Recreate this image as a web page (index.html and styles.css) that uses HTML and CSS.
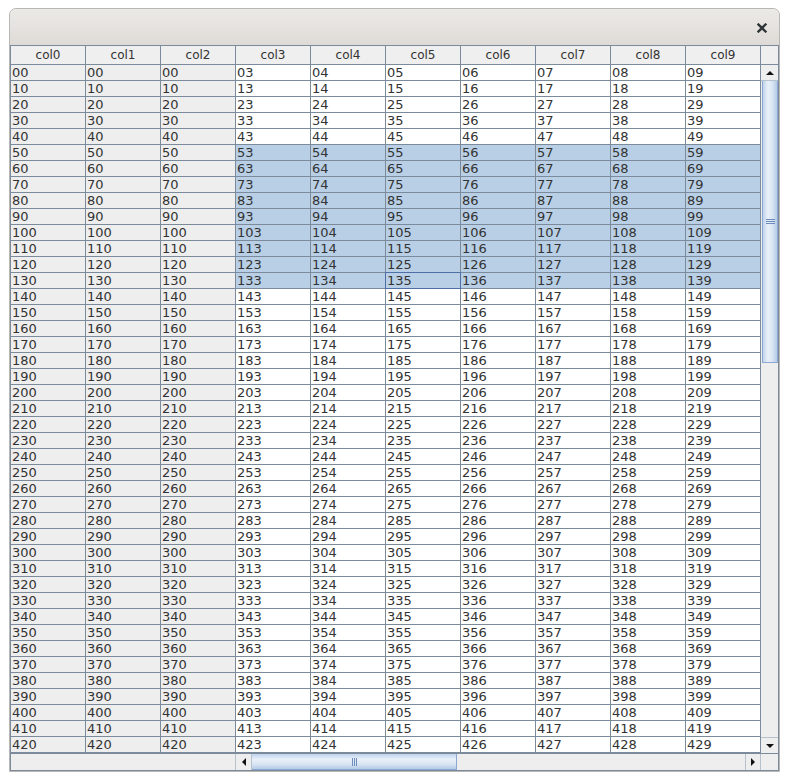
FILE: index.html
```html
<!DOCTYPE html>
<html>
<head>
<meta charset="utf-8">
<link rel="stylesheet" href="styles.css">
</head>
<body>
<div class="window">
  <div class="titlebar">
    <svg class="close" width="10" height="10" viewBox="0 0 10 10"><path d="M1.5 1.5 L8.5 8.5 M8.5 1.5 L1.5 8.5" stroke="#2e3436" stroke-width="2.3" stroke-linecap="square"/></svg>
  </div>
  <div class="pane">
    <div class="hrow">
      <span>col0</span><span>col1</span><span>col2</span><span>col3</span><span>col4</span><span>col5</span><span>col6</span><span>col7</span><span>col8</span><span>col9</span><span class="corner"></span>
    </div>
    <div class="body">
      <div class="rows">
<div class="r"><span>00</span><span>00</span><span>00</span><span>03</span><span>04</span><span>05</span><span>06</span><span>07</span><span>08</span><span>09</span></div>
<div class="r"><span>10</span><span>10</span><span>10</span><span>13</span><span>14</span><span>15</span><span>16</span><span>17</span><span>18</span><span>19</span></div>
<div class="r"><span>20</span><span>20</span><span>20</span><span>23</span><span>24</span><span>25</span><span>26</span><span>27</span><span>28</span><span>29</span></div>
<div class="r"><span>30</span><span>30</span><span>30</span><span>33</span><span>34</span><span>35</span><span>36</span><span>37</span><span>38</span><span>39</span></div>
<div class="r"><span>40</span><span>40</span><span>40</span><span>43</span><span>44</span><span>45</span><span>46</span><span>47</span><span>48</span><span>49</span></div>
<div class="r sel"><span>50</span><span>50</span><span>50</span><span>53</span><span>54</span><span>55</span><span>56</span><span>57</span><span>58</span><span>59</span></div>
<div class="r sel"><span>60</span><span>60</span><span>60</span><span>63</span><span>64</span><span>65</span><span>66</span><span>67</span><span>68</span><span>69</span></div>
<div class="r sel"><span>70</span><span>70</span><span>70</span><span>73</span><span>74</span><span>75</span><span>76</span><span>77</span><span>78</span><span>79</span></div>
<div class="r sel"><span>80</span><span>80</span><span>80</span><span>83</span><span>84</span><span>85</span><span>86</span><span>87</span><span>88</span><span>89</span></div>
<div class="r sel"><span>90</span><span>90</span><span>90</span><span>93</span><span>94</span><span>95</span><span>96</span><span>97</span><span>98</span><span>99</span></div>
<div class="r sel"><span>100</span><span>100</span><span>100</span><span>103</span><span>104</span><span>105</span><span>106</span><span>107</span><span>108</span><span>109</span></div>
<div class="r sel"><span>110</span><span>110</span><span>110</span><span>113</span><span>114</span><span>115</span><span>116</span><span>117</span><span>118</span><span>119</span></div>
<div class="r sel"><span>120</span><span>120</span><span>120</span><span>123</span><span>124</span><span>125</span><span>126</span><span>127</span><span>128</span><span>129</span></div>
<div class="r sel"><span>130</span><span>130</span><span>130</span><span>133</span><span>134</span><span class="focus">135</span><span>136</span><span>137</span><span>138</span><span>139</span></div>
<div class="r"><span>140</span><span>140</span><span>140</span><span>143</span><span>144</span><span>145</span><span>146</span><span>147</span><span>148</span><span>149</span></div>
<div class="r"><span>150</span><span>150</span><span>150</span><span>153</span><span>154</span><span>155</span><span>156</span><span>157</span><span>158</span><span>159</span></div>
<div class="r"><span>160</span><span>160</span><span>160</span><span>163</span><span>164</span><span>165</span><span>166</span><span>167</span><span>168</span><span>169</span></div>
<div class="r"><span>170</span><span>170</span><span>170</span><span>173</span><span>174</span><span>175</span><span>176</span><span>177</span><span>178</span><span>179</span></div>
<div class="r"><span>180</span><span>180</span><span>180</span><span>183</span><span>184</span><span>185</span><span>186</span><span>187</span><span>188</span><span>189</span></div>
<div class="r"><span>190</span><span>190</span><span>190</span><span>193</span><span>194</span><span>195</span><span>196</span><span>197</span><span>198</span><span>199</span></div>
<div class="r"><span>200</span><span>200</span><span>200</span><span>203</span><span>204</span><span>205</span><span>206</span><span>207</span><span>208</span><span>209</span></div>
<div class="r"><span>210</span><span>210</span><span>210</span><span>213</span><span>214</span><span>215</span><span>216</span><span>217</span><span>218</span><span>219</span></div>
<div class="r"><span>220</span><span>220</span><span>220</span><span>223</span><span>224</span><span>225</span><span>226</span><span>227</span><span>228</span><span>229</span></div>
<div class="r"><span>230</span><span>230</span><span>230</span><span>233</span><span>234</span><span>235</span><span>236</span><span>237</span><span>238</span><span>239</span></div>
<div class="r"><span>240</span><span>240</span><span>240</span><span>243</span><span>244</span><span>245</span><span>246</span><span>247</span><span>248</span><span>249</span></div>
<div class="r"><span>250</span><span>250</span><span>250</span><span>253</span><span>254</span><span>255</span><span>256</span><span>257</span><span>258</span><span>259</span></div>
<div class="r"><span>260</span><span>260</span><span>260</span><span>263</span><span>264</span><span>265</span><span>266</span><span>267</span><span>268</span><span>269</span></div>
<div class="r"><span>270</span><span>270</span><span>270</span><span>273</span><span>274</span><span>275</span><span>276</span><span>277</span><span>278</span><span>279</span></div>
<div class="r"><span>280</span><span>280</span><span>280</span><span>283</span><span>284</span><span>285</span><span>286</span><span>287</span><span>288</span><span>289</span></div>
<div class="r"><span>290</span><span>290</span><span>290</span><span>293</span><span>294</span><span>295</span><span>296</span><span>297</span><span>298</span><span>299</span></div>
<div class="r"><span>300</span><span>300</span><span>300</span><span>303</span><span>304</span><span>305</span><span>306</span><span>307</span><span>308</span><span>309</span></div>
<div class="r"><span>310</span><span>310</span><span>310</span><span>313</span><span>314</span><span>315</span><span>316</span><span>317</span><span>318</span><span>319</span></div>
<div class="r"><span>320</span><span>320</span><span>320</span><span>323</span><span>324</span><span>325</span><span>326</span><span>327</span><span>328</span><span>329</span></div>
<div class="r"><span>330</span><span>330</span><span>330</span><span>333</span><span>334</span><span>335</span><span>336</span><span>337</span><span>338</span><span>339</span></div>
<div class="r"><span>340</span><span>340</span><span>340</span><span>343</span><span>344</span><span>345</span><span>346</span><span>347</span><span>348</span><span>349</span></div>
<div class="r"><span>350</span><span>350</span><span>350</span><span>353</span><span>354</span><span>355</span><span>356</span><span>357</span><span>358</span><span>359</span></div>
<div class="r"><span>360</span><span>360</span><span>360</span><span>363</span><span>364</span><span>365</span><span>366</span><span>367</span><span>368</span><span>369</span></div>
<div class="r"><span>370</span><span>370</span><span>370</span><span>373</span><span>374</span><span>375</span><span>376</span><span>377</span><span>378</span><span>379</span></div>
<div class="r"><span>380</span><span>380</span><span>380</span><span>383</span><span>384</span><span>385</span><span>386</span><span>387</span><span>388</span><span>389</span></div>
<div class="r"><span>390</span><span>390</span><span>390</span><span>393</span><span>394</span><span>395</span><span>396</span><span>397</span><span>398</span><span>399</span></div>
<div class="r"><span>400</span><span>400</span><span>400</span><span>403</span><span>404</span><span>405</span><span>406</span><span>407</span><span>408</span><span>409</span></div>
<div class="r"><span>410</span><span>410</span><span>410</span><span>413</span><span>414</span><span>415</span><span>416</span><span>417</span><span>418</span><span>419</span></div>
<div class="r"><span>420</span><span>420</span><span>420</span><span>423</span><span>424</span><span>425</span><span>426</span><span>427</span><span>428</span><span>429</span></div>
      </div>
      <div class="vscroll">
        <div class="btn"><span class="tri up"></span></div>
        <div class="track">
          <div class="vthumb"><span class="grip-h"></span></div>
        </div>
        <div class="btn"><span class="tri down"></span></div>
      </div>
    </div>
    <div class="hbar">
      <div class="blank"></div>
      <div class="hscroll">
        <div class="hbtn"><span class="tri left"></span></div>
        <div class="htrack">
          <div class="hthumb"><span class="grip-v"></span></div>
        </div>
        <div class="hbtn"><span class="tri right"></span></div>
      </div>
      <div class="hcorner"></div>
    </div>
  </div>
</div>
</body>
</html>
```

FILE: styles.css
```css
html, body {
  margin: 0;
  padding: 0;
  background: #ffffff;
}

body {
  font-family: "DejaVu Sans", sans-serif;
  color: #333333;
}

.window {
  margin: 8px 0 0 9px;
  width: 771px;
  height: 764px;
  box-sizing: border-box;
  border: 1px solid #b9b7b3;
  border-radius: 7px 7px 0 0;
  background: #ededed;
  display: flex;
  flex-direction: column;
  overflow: hidden;
}

.titlebar {
  height: 36px;
  flex: none;
  background: linear-gradient(#eceae7, #dedbd7);
  display: flex;
  align-items: center;
  justify-content: flex-end;
  padding-right: 12px;
  border-radius: 6px 6px 0 0;
}

.close {
  display: block;
  margin-top: 1px;
}

.pane {
  border: 1px solid #7b8b9b;
  display: flex;
  flex-direction: column;
  background: #eeeeee;
}

.hrow {
  display: flex;
  height: 19px;
}

.hrow span {
  width: 75px;
  box-sizing: border-box;
  border-right: 1px solid #7b8b9b;
  border-bottom: 1px solid #7b8b9b;
  background: #efefef;
  font-size: 12px;
  line-height: 19px;
  text-align: center;
  color: #333333;
}

.hrow .corner {
  width: 17px;
  border-right: none;
}

.body {
  display: flex;
}

.rows {
  width: 750px;
}

.r {
  display: flex;
  height: 16px;
}

.r span {
  position: relative;
  width: 75px;
  box-sizing: border-box;
  border-right: 1px solid #7b8b9b;
  border-bottom: 1px solid #7b8b9b;
  background: #ffffff;
  font-size: 13px;
  line-height: 15px;
  padding-left: 1px;
  color: #333333;
}

.r span:nth-child(-n+3) {
  background: #eeeeee;
}

.r.sel span:nth-child(n+4) {
  background: #b8cfe5;
}

.r span.focus::after {
  content: "";
  position: absolute;
  left: -1px;
  top: -1px;
  right: -1px;
  bottom: -1px;
  border: 1px solid #4f6fa6;
}

.vscroll {
  width: 17px;
  height: 688px;
  display: flex;
  flex-direction: column;
  background: #eeeeee;
}

.btn {
  height: 16px;
  flex: none;
  display: flex;
  align-items: center;
  justify-content: center;
  background: #eeeeee;
  border-bottom: 1px solid #b6c3cf;
  box-sizing: border-box;
}

.btn:last-child {
  border-bottom: none;
  border-top: 1px solid #b6c3cf;
}

.track {
  flex: 1;
  background: #eeeeee;
}

.vthumb {
  height: 282px;
  margin-left: 1px;
  box-sizing: border-box;
  border: 1px solid #8aa8d2;
  border-top: none;
  background: linear-gradient(to right, #c0d4ec, #e9f0f9 35%, #dbe6f4 65%, #b5cbe6);
  display: flex;
  align-items: center;
  justify-content: center;
}

.grip-h {
  width: 9px;
  height: 5px;
  background: linear-gradient(#6d8cbd 0 1px, transparent 1px 2px, #6d8cbd 2px 3px, transparent 3px 4px, #6d8cbd 4px 5px);
}

.tri {
  width: 0;
  height: 0;
  display: block;
}

.tri.up {
  border-left: 4px solid transparent;
  border-right: 4px solid transparent;
  border-bottom: 4px solid #111111;
}

.tri.down {
  border-left: 4px solid transparent;
  border-right: 4px solid transparent;
  border-top: 4px solid #111111;
}

.tri.left {
  border-top: 4px solid transparent;
  border-bottom: 4px solid transparent;
  border-right: 4px solid #111111;
}

.tri.right {
  border-top: 4px solid transparent;
  border-bottom: 4px solid transparent;
  border-left: 4px solid #111111;
}

.hbar {
  display: flex;
  height: 17px;
  border-top: 1px solid #7b8b9b;
  box-sizing: border-box;
}

.blank {
  width: 225px;
  background: #eeeeee;
  border-right: 1px solid #b6c3cf;
  box-sizing: border-box;
}

.hscroll {
  width: 525px;
  display: flex;
  background: #eeeeee;
}

.hbtn {
  width: 16px;
  flex: none;
  display: flex;
  align-items: center;
  justify-content: center;
  box-sizing: border-box;
  border-right: 1px solid #b6c3cf;
}

.hbtn:last-child {
  border-right: 1px solid #b6c3cf;
  border-left: 1px solid #b6c3cf;
}

.htrack {
  flex: 1;
}

.hthumb {
  width: 205px;
  height: 100%;
  box-sizing: border-box;
  border-right: 1px solid #8aa8d2;
  border-bottom: 1px solid #8aa8d2;
  background: linear-gradient(#c0d4ec, #e9f0f9 35%, #dbe6f4 65%, #b5cbe6);
  display: flex;
  align-items: center;
  justify-content: center;
}

.grip-v {
  width: 5px;
  height: 8px;
  background: linear-gradient(to right, #6d8cbd 0 1px, transparent 1px 2px, #6d8cbd 2px 3px, transparent 3px 4px, #6d8cbd 4px 5px);
}

.hcorner {
  width: 17px;
  background: #eeeeee;
}
```
